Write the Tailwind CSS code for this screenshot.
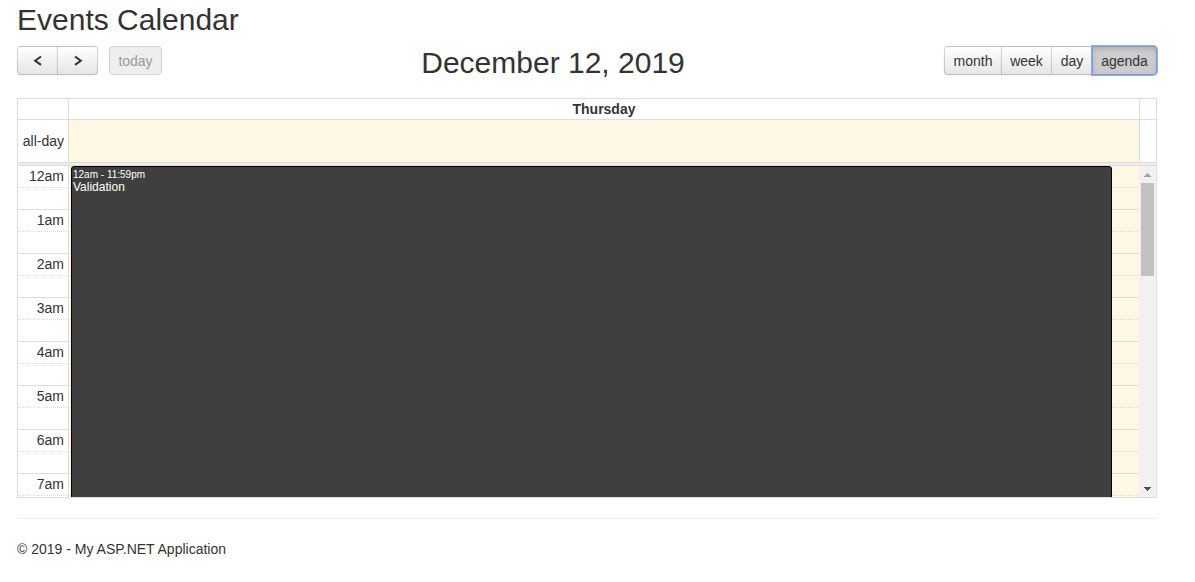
<!DOCTYPE html>
<html lang="en">
<head>
<meta charset="utf-8">
<title>Events Calendar</title>
<script src="https://cdn.jsdelivr.net/npm/@tailwindcss/browser@4"></script>
</head>
<body class="bg-white pl-[17px] pr-[38px] font-['Liberation_Sans',Arial,sans-serif] text-sm leading-5 text-[#333]">
<main>
  <h1 class="pt-1 pb-2.5 text-3xl leading-8 font-normal">Events Calendar</h1>

  <header class="flex items-start justify-between">
    <div class="flex gap-[11px]">
      <div class="flex">
        <button aria-label="Previous" class="flex h-[29px] w-[41px] items-center justify-center rounded-l border border-black/15 border-b-black/25 bg-linear-to-b from-white to-[#e6e6e6] shadow-xs">
          <svg class="h-3 w-3" viewBox="0 0 12 12" fill="none" stroke="#333" stroke-width="2"><path d="M9 1.500 3.200 5.700l5.800 4.200"/></svg>
        </button>
        <button aria-label="Next" class="-ml-px flex h-[29px] w-[41px] items-center justify-center rounded-r border border-black/15 border-b-black/25 bg-linear-to-b from-white to-[#e6e6e6] shadow-xs">
          <svg class="h-3 w-3" viewBox="0 0 12 12" fill="none" stroke="#333" stroke-width="2"><path d="M3 1.500l5.800 4.200L3 9.900"/></svg>
        </button>
      </div>
      <button disabled class="h-[29px] w-[53px] rounded border border-[#d4d4d4] bg-[#eee] text-[#999]">today</button>
    </div>
    <h2 class="text-3xl leading-[34px] font-normal">December 12, 2019</h2>
    <div class="flex text-shadow-[0_1px_1px_rgb(255_255_255/0.75)]">
      <button class="h-[29px] w-[58px] rounded-l border border-black/15 border-b-black/25 bg-linear-to-b from-white to-[#e6e6e6] shadow-xs">month</button>
      <button class="-ml-px h-[29px] w-[51px] border border-black/15 border-b-black/25 bg-linear-to-b from-white to-[#e6e6e6] shadow-xs">week</button>
      <button class="-ml-px h-[29px] w-[42px] border border-black/15 border-b-black/25 bg-linear-to-b from-white to-[#e6e6e6] shadow-xs">day</button>
      <button aria-pressed="true" class="-ml-px h-[29px] w-[65px] rounded-r-sm border border-[#7f9fd6] bg-[#ccc] shadow-[inset_0_2px_4px_rgb(0_0_0/0.15),0_0_0_1px_#86adf0]">agenda</button>
    </div>
  </header>

  <section class="mt-[18px] border border-[#ddd]">
    <table class="w-full table-fixed border-separate border-spacing-0">
      <colgroup><col class="w-[50px]"><col><col class="w-[17px]"></colgroup>
      <thead>
        <tr>
          <td class="h-5 p-0"></td>
          <th class="h-5 border-l border-[#ddd] p-0 leading-5 font-bold">Thursday</th>
          <td class="h-5 border-l border-[#ddd] p-0"></td>
        </tr>
      </thead>
      <tbody>
        <tr>
          <th class="h-[43px] border-t border-[#ddd] p-0 pr-1 text-right font-normal">all-day</th>
          <td class="border-t border-l border-[#ddd] bg-[#fef7e4] p-0"></td>
          <td class="border-t border-l border-[#ddd] p-0"></td>
        </tr>
      </tbody>
    </table>
    <div class="h-1 border-y border-[#ddd] bg-[#eee]"></div>

    <div class="flex h-[331px] overflow-hidden">
      <div class="relative flex-1">
        <table class="w-full table-fixed border-separate border-spacing-0">
          <colgroup><col class="w-[50px]"><col></colgroup>
          <tbody id="slots"></tbody>
        </table>
        <article class="absolute top-0 right-[27px] left-[53px] h-[1056px] rounded-[3px] border border-black bg-[#3f3f3f] px-px text-white">
          <div class="pt-0.5 text-[10px] leading-3">12am - 11:59pm</div>
          <div class="text-xs leading-3">Validation</div>
        </article>
      </div>
      <div class="flex w-[17px] flex-col items-center bg-[#f1f1f1]" aria-hidden="true">
        <div class="flex h-[17px] w-full items-center justify-center">
          <svg class="h-1 w-[7px]" viewBox="0 0 7 4" fill="#a3a3a3" shape-rendering="crispEdges"><path d="M3 0h1v1h1v1h1v1h1v1H0V3h1V2h1V1h1z"/></svg>
        </div>
        <div class="h-[93px] w-[13px] bg-[#c1c1c1]"></div>
        <div class="mt-auto flex h-[17px] w-full items-center justify-center">
          <svg class="h-1 w-[7px]" viewBox="0 0 7 4" fill="#505050" shape-rendering="crispEdges"><path d="M0 0h7v1H6v1H5v1H4v1H3V3H2V2H1V1H0z"/></svg>
        </div>
      </div>
    </div>
  </section>
</main>

<footer class="mt-5 border-t border-[#eee] pt-5">
  <p>© 2019 - My ASP.NET Application</p>
</footer>

<script>
  const slots = document.getElementById('slots');
  for (let h = 0; h < 8; h++) {
    const top = h ? 'h-[22px] border-t' : 'h-[21px]';
    slots.insertAdjacentHTML('beforeend', `
      <tr><th class="${top} border-[#ddd] p-0 pr-1 text-right align-top leading-5 font-normal">${h || 12}am</th><td class="${top} border-l border-[#ddd] bg-[#fef7e4] p-0"></td></tr>
      <tr><td class="h-[22px] border-t border-dotted border-[#ddd] p-0"></td><td class="h-[22px] border-t border-l border-[#ddd] [border-top-style:dotted] bg-[#fef7e4] p-0"></td></tr>`);
  }
</script>
</body>
</html>
